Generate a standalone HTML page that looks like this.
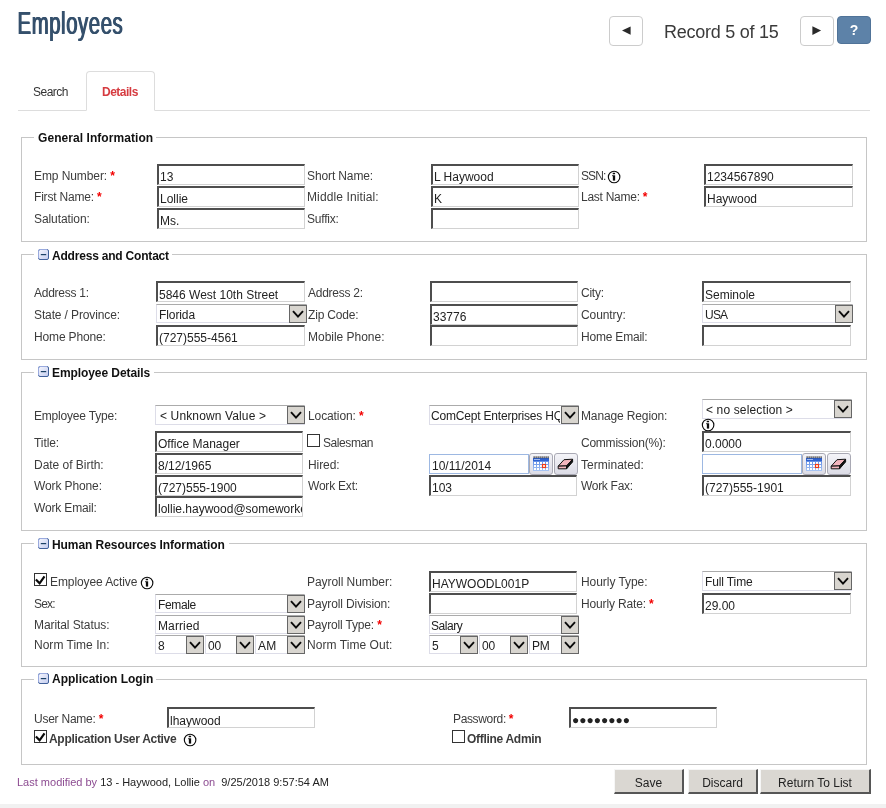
<!DOCTYPE html><html><head><meta charset="utf-8"><title>Employees</title><style>
html,body{margin:0;padding:0;}
body{width:886px;height:808px;position:relative;overflow:hidden;background:#fff;font-family:"Liberation Sans",sans-serif;font-size:12px;color:#333;}
#w{position:absolute;left:0;top:0;width:886px;height:808px;will-change:transform;}
.a{position:absolute;white-space:nowrap;}
.l{position:absolute;white-space:nowrap;font-size:12px;line-height:14px;height:14px;color:#3c3c3c;}
.l b.r{color:#f20000;font-weight:bold;}
.fs{position:absolute;border:1px solid #c6c6c6;box-sizing:border-box;}
.lg{position:absolute;background:#fff;font-weight:bold;font-size:12px;line-height:14px;height:14px;color:#111;white-space:nowrap;}
.in{position:absolute;box-sizing:border-box;height:21px;border-style:solid;border-width:2px 1px 1px 2px;border-color:#4e4e4e #d2d2d2 #d2d2d2 #4e4e4e;background:#fff;font-size:12px;line-height:14px;padding:4px 0 0 1px;color:#222;white-space:nowrap;overflow:hidden;}
.dt{position:absolute;box-sizing:border-box;height:20px;border:1px solid #9db8e2;background:#fff;font-size:12px;line-height:14px;padding:4px 0 0 2px;color:#222;white-space:nowrap;overflow:hidden;}
.se{position:absolute;box-sizing:border-box;height:20px;border:1px solid #dddde8;border-top-color:#ababab;background:#fff;font-size:12px;line-height:14px;padding:3px 0 0 4px;color:#222;white-space:nowrap;}
.se span{display:block;overflow:hidden;}
.se i{position:absolute;box-sizing:border-box;right:-1px;top:0;width:18px;height:18px;border:1px solid #666;background:#d8d5cf;}
.se i svg{position:absolute;left:2px;top:4px;}
.cb{position:absolute;box-sizing:border-box;width:13px;height:13px;border:1px solid #333;background:#fff;}
.cb svg{position:absolute;left:-1px;top:-1px;}
.ic{position:absolute;width:11px;height:11px;}
.inf{position:absolute;width:14px;height:14px;}
.db{position:absolute;box-sizing:border-box;width:24px;height:22px;border:1px solid #a9a9b4;border-radius:3px;background:linear-gradient(#f4f4f8,#dcdce6);}
.db svg{position:absolute;}
.btn{position:absolute;box-sizing:border-box;height:25px;background:#dad7d2;border-style:solid;border-width:1px 2px 2px 1px;border-color:#f6f6f6 #565656 #565656 #f6f6f6;font-size:12px;line-height:14px;text-align:center;padding-top:6px;color:#222;}
</style></head><body><div id="w">
<div class="a" id="h1" style="left:17px;top:3px;font-size:32px;line-height:40px;color:#35506c;letter-spacing:0.9px;text-shadow:0.8px 0 0 #35506c,1.6px 0 0 #35506c;transform-origin:0 0;transform:scaleX(0.636);">Employees</div>
<div class="a" style="left:609px;top:16px;width:34px;height:30px;box-sizing:border-box;border:1px solid #ccc;border-radius:4px;background:#fff;"></div>
<svg class="a" style="left:620px;top:25px" width="12" height="12" viewBox="0 0 12 12"><path d="M10.6 1.4 L2 5.6 L10.6 9.8 Z" fill="#2a2a2a"/></svg>
<div class="a" id="rec" style="left:664px;top:20px;font-size:18px;line-height:24px;color:#3a3a3a;letter-spacing:-0.25px;">Record 5 of 15</div>
<div class="a" style="left:800px;top:16px;width:34px;height:30px;box-sizing:border-box;border:1px solid #ccc;border-radius:4px;background:#fff;"></div>
<svg class="a" style="left:811px;top:25px" width="12" height="12" viewBox="0 0 12 12"><path d="M1.4 1.2 L10.1 5.5 L1.4 9.9 Z" fill="#2a2a2a"/></svg>
<div class="a" style="left:837px;top:16px;width:34px;height:28px;box-sizing:border-box;border:1px solid #507398;border-radius:4px;background:#5d82a8;color:#fff;font-weight:bold;font-size:14px;line-height:27px;text-align:center;">?</div>
<div class="a" style="left:18px;top:110px;width:852px;height:1px;background:#ddd;"></div>
<div class="a" style="left:86px;top:71px;width:69px;height:40px;box-sizing:border-box;border:1px solid #ddd;border-bottom:1px solid #fff;border-radius:4px 4px 0 0;background:#fff;"></div>
<div class="a" id="tab1" style="left:33px;top:85px;font-size:12px;line-height:14px;color:#333;letter-spacing:-0.5px;">Search</div>
<div class="a" id="tab2" style="left:102px;top:85px;font-size:12px;line-height:14px;color:#d63b40;font-weight:bold;letter-spacing:-0.5px;">Details</div>
<div class="fs" style="left:21px;top:137px;width:846px;height:105px;"></div>
<div class="lg" style="left:34px;top:131px;width:118px;padding-left:4px;letter-spacing:0.06px;">General Information</div>
<div class="l" style="left:34px;top:169px;letter-spacing:-0.086px;">Emp Number: <b class="r">*</b></div>
<div class="in" style="left:157px;top:164px;width:148px;">13</div>
<div class="l" style="left:307px;top:169px;letter-spacing:-0.118px;">Short Name:</div>
<div class="in" style="left:431px;top:164px;width:148px;">L Haywood</div>
<div class="l" style="left:581px;top:169px;letter-spacing:-0.923px;">SSN:</div>
<svg class="inf" style="left:607px;top:170px" viewBox="0 0 14 14"><circle cx="7.1" cy="7" r="5.75" fill="#fff" stroke="#0c0c0c" stroke-width="1.15"/><rect x="5.85" y="5.3" width="2.3" height="5.3" fill="#0c0c0c"/><rect x="5.1" y="5.3" width="1" height="0.85" fill="#0c0c0c"/><rect x="5.7" y="2.65" width="2.4" height="1.6" rx="0.5" fill="#0c0c0c"/></svg>
<div class="in" style="left:704px;top:164px;width:149px;">1234567890</div>
<div class="l" style="left:34px;top:190px;letter-spacing:-0.195px;">First Name: <b class="r">*</b></div>
<div class="in" style="left:157px;top:186px;width:148px;">Lollie</div>
<div class="l" style="left:307px;top:190px;letter-spacing:0.114px;">Middle Initial:</div>
<div class="in" style="left:431px;top:186px;width:148px;">K</div>
<div class="l" style="left:581px;top:190px;letter-spacing:-0.262px;">Last Name: <b class="r">*</b></div>
<div class="in" style="left:704px;top:186px;width:149px;">Haywood</div>
<div class="l" style="left:34px;top:212px;letter-spacing:-0.088px;">Salutation:</div>
<div class="in" style="left:157px;top:208px;width:148px;">Ms.</div>
<div class="l" style="left:307px;top:212px;letter-spacing:-0.207px;">Suffix:</div>
<div class="in" style="left:431px;top:208px;width:148px;"></div>
<div class="fs" style="left:21px;top:254px;width:846px;height:106px;"></div>
<div class="lg" style="left:34px;top:249px;width:120px;padding-left:18px;letter-spacing:-0.2px;">Address and Contact</div>
<svg class="ic" style="left:38px;top:249px" viewBox="0 0 11 11"><defs><linearGradient id="g1" x1="0" y1="0" x2="1" y2="1"><stop offset="0" stop-color="#f6f7fe"/><stop offset="1" stop-color="#c3ccef"/></linearGradient></defs><rect x="0.5" y="0.5" width="10" height="10" rx="1.5" fill="url(#g1)" stroke="#40609a"/><path d="M0.5 9.3 V2 Q0.5 0.5 2 0.5 H9.3" fill="none" stroke="#9aaade"/><rect x="2.8" y="5" width="5.4" height="1.2" fill="#1b4166"/></svg>
<div class="l" style="left:34px;top:286px;letter-spacing:-0.253px;">Address 1:</div>
<div class="in" style="left:156px;top:281px;width:149px;padding-top:5px;">5846 West 10th Street</div>
<div class="l" style="left:308px;top:286px;letter-spacing:-0.253px;">Address 2:</div>
<div class="in" style="left:430px;top:281px;width:148px;"></div>
<div class="l" style="left:581px;top:286px;letter-spacing:-0.24px;">City:</div>
<div class="in" style="left:702px;top:281px;width:149px;padding-top:5px;">Seminole</div>
<div class="l" style="left:34px;top:308px;letter-spacing:-0.125px;">State / Province:</div>
<div class="se" style="left:156px;top:304px;width:151px;height:19px;padding-top:3px;padding-left:2px;letter-spacing:-0.094px;"><span style="width:129px">Florida</span><i><svg width="12" height="9" viewBox="0 0 12 9"><path d="M1 1.2 L6 6.6 L11 1.2" fill="none" stroke="#0a0a0a" stroke-width="1.9"/></svg></i></div>
<div class="l" style="left:308px;top:308px;letter-spacing:-0.171px;">Zip Code:</div>
<div class="in" style="left:430px;top:304px;width:148px;">33776</div>
<div class="l" style="left:581px;top:308px;letter-spacing:-0.085px;">Country:</div>
<div class="se" style="left:702px;top:304px;width:151px;height:19px;padding-top:3px;padding-left:2px;letter-spacing:-0.778px;"><span style="width:129px">USA</span><i><svg width="12" height="9" viewBox="0 0 12 9"><path d="M1 1.2 L6 6.6 L11 1.2" fill="none" stroke="#0a0a0a" stroke-width="1.9"/></svg></i></div>
<div class="l" style="left:34px;top:330px;letter-spacing:-0.153px;">Home Phone:</div>
<div class="in" style="left:156px;top:325px;width:149px;">(727)555-4561</div>
<div class="l" style="left:308px;top:330px;letter-spacing:-0.02px;">Mobile Phone:</div>
<div class="in" style="left:430px;top:325px;width:148px;"></div>
<div class="l" style="left:581px;top:330px;letter-spacing:-0.202px;">Home Email:</div>
<div class="in" style="left:702px;top:325px;width:149px;"></div>
<div class="fs" style="left:21px;top:372px;width:846px;height:159px;"></div>
<div class="lg" style="left:34px;top:366px;width:102px;padding-left:18px;letter-spacing:-0.08px;">Employee Details</div>
<svg class="ic" style="left:38px;top:366px" viewBox="0 0 11 11"><defs><linearGradient id="g2" x1="0" y1="0" x2="1" y2="1"><stop offset="0" stop-color="#f6f7fe"/><stop offset="1" stop-color="#c3ccef"/></linearGradient></defs><rect x="0.5" y="0.5" width="10" height="10" rx="1.5" fill="url(#g2)" stroke="#40609a"/><path d="M0.5 9.3 V2 Q0.5 0.5 2 0.5 H9.3" fill="none" stroke="#9aaade"/><rect x="2.8" y="5" width="5.4" height="1.2" fill="#1b4166"/></svg>
<div class="l" style="left:34px;top:409px;letter-spacing:-0.197px;">Employee Type:</div>
<div class="se" style="left:155px;top:405px;width:150px;height:20px;padding-top:3px;padding-left:4px;letter-spacing:0.132px;"><span style="width:126px">&lt; Unknown Value &gt;</span><i><svg width="12" height="9" viewBox="0 0 12 9"><path d="M1 1.2 L6 6.6 L11 1.2" fill="none" stroke="#0a0a0a" stroke-width="1.9"/></svg></i></div>
<div class="l" style="left:308px;top:409px;letter-spacing:-0.104px;">Location: <b class="r">*</b></div>
<div class="se" style="left:429px;top:405px;width:150px;height:20px;padding-top:3px;padding-left:1px;letter-spacing:-0.194px;"><span style="width:129px">ComCept Enterprises HQ</span><i><svg width="12" height="9" viewBox="0 0 12 9"><path d="M1 1.2 L6 6.6 L11 1.2" fill="none" stroke="#0a0a0a" stroke-width="1.9"/></svg></i></div>
<div class="l" style="left:581px;top:409px;letter-spacing:-0.13px;">Manage Region:</div>
<div class="se" style="left:702px;top:399px;width:150px;height:20px;padding-top:3px;padding-left:3px;letter-spacing:0.141px;"><span style="width:127px">&lt; no selection &gt;</span><i><svg width="12" height="9" viewBox="0 0 12 9"><path d="M1 1.2 L6 6.6 L11 1.2" fill="none" stroke="#0a0a0a" stroke-width="1.9"/></svg></i></div>
<svg class="inf" style="left:701px;top:418px" viewBox="0 0 14 14"><circle cx="7.1" cy="7" r="5.75" fill="#fff" stroke="#0c0c0c" stroke-width="1.15"/><rect x="5.85" y="5.3" width="2.3" height="5.3" fill="#0c0c0c"/><rect x="5.1" y="5.3" width="1" height="0.85" fill="#0c0c0c"/><rect x="5.7" y="2.65" width="2.4" height="1.6" rx="0.5" fill="#0c0c0c"/></svg>
<div class="l" style="left:34px;top:436px;letter-spacing:-0.086px;">Title:</div>
<div class="in" style="left:155px;top:431px;width:148px;">Office Manager</div>
<div class="cb" style="left:307px;top:434px;"></div>
<div class="l" style="left:323px;top:436px;letter-spacing:-0.419px;">Salesman</div>
<div class="l" style="left:581px;top:436px;letter-spacing:-0.237px;">Commission(%):</div>
<div class="in" style="left:702px;top:431px;width:149px;">0.0000</div>
<div class="l" style="left:34px;top:458px;letter-spacing:-0.028px;">Date of Birth:</div>
<div class="in" style="left:155px;top:453px;width:148px;">8/12/1965</div>
<div class="l" style="left:308px;top:458px;letter-spacing:-0.08px;">Hired:</div>
<div class="dt" style="left:429px;top:454px;width:100px;">10/11/2014</div>
<div class="db" style="left:529px;top:453px;"><svg style="left:3px;top:2px" width="16" height="16" viewBox="0 0 16 16"><defs><linearGradient id="cg429" x1="0" y1="0" x2="0" y2="1"><stop offset="0" stop-color="#4a7be0"/><stop offset="1" stop-color="#a9c6f4"/></linearGradient></defs><rect x="0" y="2" width="16" height="13" fill="url(#cg429)"/><rect x="0" y="2" width="16" height="3" fill="#2f62d0"/><rect x="1" y="3" width="6" height="1" fill="#9db9f0"/><rect x="0.6" y="0.3" width="1" height="2" fill="#222"/><rect x="2.6" y="0.3" width="1" height="2" fill="#222"/><rect x="4.6" y="0.3" width="1" height="2" fill="#222"/><rect x="6.6" y="0.3" width="1" height="2" fill="#222"/><rect x="8.6" y="0.3" width="1" height="2" fill="#222"/><rect x="10.6" y="0.3" width="1" height="2" fill="#222"/><rect x="12.6" y="0.3" width="1" height="2" fill="#222"/><rect x="14.6" y="0.3" width="1" height="2" fill="#222"/><rect x="1" y="6" width="2" height="2" fill="#fff"/><rect x="4" y="6" width="2" height="2" fill="#fff"/><rect x="7" y="6" width="2" height="2" fill="#fff"/><rect x="10" y="6" width="2" height="2" fill="#fff"/><rect x="13" y="6" width="2" height="2" fill="#fff"/><rect x="1" y="9" width="2" height="2" fill="#fff"/><rect x="4" y="9" width="2" height="2" fill="#fff"/><rect x="7" y="9" width="2" height="2" fill="#fff"/><rect x="10" y="9" width="2" height="2" fill="#fff"/><rect x="13" y="9" width="2" height="2" fill="#fff"/><rect x="1" y="12" width="2" height="2" fill="#fff"/><rect x="4" y="12" width="2" height="2" fill="#fff"/><rect x="7" y="12" width="2" height="2" fill="#fff"/><rect x="10" y="12" width="2" height="2" fill="#fff"/><rect x="13" y="12" width="2" height="2" fill="#fff"/><rect x="9.5" y="8.5" width="3" height="3" fill="#fff" stroke="#f03a14" stroke-width="1.2"/></svg></div>
<div class="db" style="left:554px;top:453px;"><svg style="left:2px;top:3px" width="18" height="14" viewBox="0 0 18 14"><path d="M1.2 9.2 L7 2.7 L15.6 2.2 L9.6 8.9 Z" fill="#f3b6be" stroke="#111" stroke-width="1" stroke-linejoin="round"/><path d="M1.2 9.2 L9.6 8.9 L9.6 11.8 L1.2 11.8 Z" fill="#f3b6be" stroke="#111" stroke-width="1" stroke-linejoin="round"/><path d="M9.6 8.9 L15.6 2.2 L15.6 4.9 L9.6 11.8 Z" fill="#111" stroke="#111" stroke-width="1" stroke-linejoin="round"/></svg></div>
<div class="l" style="left:581px;top:458px;letter-spacing:0.02px;">Terminated:</div>
<div class="dt" style="left:702px;top:454px;width:100px;"></div>
<div class="db" style="left:802px;top:453px;"><svg style="left:3px;top:2px" width="16" height="16" viewBox="0 0 16 16"><defs><linearGradient id="cg702" x1="0" y1="0" x2="0" y2="1"><stop offset="0" stop-color="#4a7be0"/><stop offset="1" stop-color="#a9c6f4"/></linearGradient></defs><rect x="0" y="2" width="16" height="13" fill="url(#cg702)"/><rect x="0" y="2" width="16" height="3" fill="#2f62d0"/><rect x="1" y="3" width="6" height="1" fill="#9db9f0"/><rect x="0.6" y="0.3" width="1" height="2" fill="#222"/><rect x="2.6" y="0.3" width="1" height="2" fill="#222"/><rect x="4.6" y="0.3" width="1" height="2" fill="#222"/><rect x="6.6" y="0.3" width="1" height="2" fill="#222"/><rect x="8.6" y="0.3" width="1" height="2" fill="#222"/><rect x="10.6" y="0.3" width="1" height="2" fill="#222"/><rect x="12.6" y="0.3" width="1" height="2" fill="#222"/><rect x="14.6" y="0.3" width="1" height="2" fill="#222"/><rect x="1" y="6" width="2" height="2" fill="#fff"/><rect x="4" y="6" width="2" height="2" fill="#fff"/><rect x="7" y="6" width="2" height="2" fill="#fff"/><rect x="10" y="6" width="2" height="2" fill="#fff"/><rect x="13" y="6" width="2" height="2" fill="#fff"/><rect x="1" y="9" width="2" height="2" fill="#fff"/><rect x="4" y="9" width="2" height="2" fill="#fff"/><rect x="7" y="9" width="2" height="2" fill="#fff"/><rect x="10" y="9" width="2" height="2" fill="#fff"/><rect x="13" y="9" width="2" height="2" fill="#fff"/><rect x="1" y="12" width="2" height="2" fill="#fff"/><rect x="4" y="12" width="2" height="2" fill="#fff"/><rect x="7" y="12" width="2" height="2" fill="#fff"/><rect x="10" y="12" width="2" height="2" fill="#fff"/><rect x="13" y="12" width="2" height="2" fill="#fff"/><rect x="9.5" y="8.5" width="3" height="3" fill="#fff" stroke="#f03a14" stroke-width="1.2"/></svg></div>
<div class="db" style="left:827px;top:453px;"><svg style="left:2px;top:3px" width="18" height="14" viewBox="0 0 18 14"><path d="M1.2 9.2 L7 2.7 L15.6 2.2 L9.6 8.9 Z" fill="#f3b6be" stroke="#111" stroke-width="1" stroke-linejoin="round"/><path d="M1.2 9.2 L9.6 8.9 L9.6 11.8 L1.2 11.8 Z" fill="#f3b6be" stroke="#111" stroke-width="1" stroke-linejoin="round"/><path d="M9.6 8.9 L15.6 2.2 L15.6 4.9 L9.6 11.8 Z" fill="#111" stroke="#111" stroke-width="1" stroke-linejoin="round"/></svg></div>
<div class="l" style="left:34px;top:479px;letter-spacing:-0.116px;">Work Phone:</div>
<div class="in" style="left:155px;top:475px;width:148px;">(727)555-1900</div>
<div class="l" style="left:308px;top:479px;letter-spacing:-0.209px;">Work Ext:</div>
<div class="in" style="left:429px;top:475px;width:148px;">103</div>
<div class="l" style="left:581px;top:479px;letter-spacing:-0.302px;">Work Fax:</div>
<div class="in" style="left:702px;top:475px;width:149px;">(727)555-1901</div>
<div class="l" style="left:34px;top:501px;letter-spacing:-0.165px;">Work Email:</div>
<div class="in" style="left:155px;top:496px;width:148px;">lollie.haywood@someworkemail.com</div>
<div class="fs" style="left:21px;top:543px;width:846px;height:124px;"></div>
<div class="lg" style="left:34px;top:538px;width:177px;padding-left:18px;letter-spacing:-0.07px;">Human Resources Information</div>
<svg class="ic" style="left:38px;top:538px" viewBox="0 0 11 11"><defs><linearGradient id="g3" x1="0" y1="0" x2="1" y2="1"><stop offset="0" stop-color="#f6f7fe"/><stop offset="1" stop-color="#c3ccef"/></linearGradient></defs><rect x="0.5" y="0.5" width="10" height="10" rx="1.5" fill="url(#g3)" stroke="#40609a"/><path d="M0.5 9.3 V2 Q0.5 0.5 2 0.5 H9.3" fill="none" stroke="#9aaade"/><rect x="2.8" y="5" width="5.4" height="1.2" fill="#1b4166"/></svg>
<div class="cb" style="left:34px;top:573px;"><svg width="13" height="13" viewBox="0 0 13 13"><path d="M1.9 6.5 L5.6 10.3 L10.5 3.3" fill="none" stroke="#0a0a0a" stroke-width="2.2"/></svg></div>
<div class="l" style="left:50px;top:575px;letter-spacing:-0.092px;">Employee Active</div>
<svg class="inf" style="left:140px;top:576px" viewBox="0 0 14 14"><circle cx="7.1" cy="7" r="5.75" fill="#fff" stroke="#0c0c0c" stroke-width="1.15"/><rect x="5.85" y="5.3" width="2.3" height="5.3" fill="#0c0c0c"/><rect x="5.1" y="5.3" width="1" height="0.85" fill="#0c0c0c"/><rect x="5.7" y="2.65" width="2.4" height="1.6" rx="0.5" fill="#0c0c0c"/></svg>
<div class="l" style="left:307px;top:575px;letter-spacing:-0.058px;">Payroll Number:</div>
<div class="in" style="left:429px;top:571px;width:148px;">HAYWOODL001P</div>
<div class="l" style="left:581px;top:575px;letter-spacing:-0.055px;">Hourly Type:</div>
<div class="se" style="left:702px;top:571px;width:150px;height:20px;padding-top:3px;padding-left:2px;letter-spacing:-0.122px;"><span style="width:128px">Full Time</span><i><svg width="12" height="9" viewBox="0 0 12 9"><path d="M1 1.2 L6 6.6 L11 1.2" fill="none" stroke="#0a0a0a" stroke-width="1.9"/></svg></i></div>
<div class="l" style="left:34px;top:597px;letter-spacing:-0.814px;">Sex:</div>
<div class="se" style="left:155px;top:594px;width:150px;height:19px;padding-top:3px;padding-left:2px;letter-spacing:-0.37px;"><span style="width:128px">Female</span><i><svg width="12" height="9" viewBox="0 0 12 9"><path d="M1 1.2 L6 6.6 L11 1.2" fill="none" stroke="#0a0a0a" stroke-width="1.9"/></svg></i></div>
<div class="l" style="left:307px;top:597px;letter-spacing:-0.12px;">Payroll Division:</div>
<div class="in" style="left:429px;top:593px;width:148px;"></div>
<div class="l" style="left:581px;top:597px;letter-spacing:-0.155px;">Hourly Rate: <b class="r">*</b></div>
<div class="in" style="left:702px;top:593px;width:149px;">29.00</div>
<div class="l" style="left:34px;top:618px;letter-spacing:-0.085px;">Marital Status:</div>
<div class="se" style="left:155px;top:615px;width:150px;height:19px;padding-top:3px;padding-left:2px;letter-spacing:0.11px;"><span style="width:128px">Married</span><i><svg width="12" height="9" viewBox="0 0 12 9"><path d="M1 1.2 L6 6.6 L11 1.2" fill="none" stroke="#0a0a0a" stroke-width="1.9"/></svg></i></div>
<div class="l" style="left:307px;top:618px;letter-spacing:-0.163px;">Payroll Type: <b class="r">*</b></div>
<div class="se" style="left:429px;top:615px;width:150px;height:19px;padding-top:3px;padding-left:1px;letter-spacing:-0.429px;"><span style="width:129px">Salary</span><i><svg width="12" height="9" viewBox="0 0 12 9"><path d="M1 1.2 L6 6.6 L11 1.2" fill="none" stroke="#0a0a0a" stroke-width="1.9"/></svg></i></div>
<div class="l" style="left:34px;top:638px;letter-spacing:0.016px;">Norm Time In:</div>
<div class="se" style="left:155px;top:635px;width:49px;height:19px;padding-top:3px;padding-left:2px;letter-spacing:-0.219px;"><span style="width:27px">8</span><i><svg width="12" height="9" viewBox="0 0 12 9"><path d="M1 1.2 L6 6.6 L11 1.2" fill="none" stroke="#0a0a0a" stroke-width="1.9"/></svg></i></div>
<div class="se" style="left:205px;top:635px;width:49px;height:19px;padding-top:3px;padding-left:2px;letter-spacing:-0.211px;"><span style="width:27px">00</span><i><svg width="12" height="9" viewBox="0 0 12 9"><path d="M1 1.2 L6 6.6 L11 1.2" fill="none" stroke="#0a0a0a" stroke-width="1.9"/></svg></i></div>
<div class="se" style="left:255px;top:635px;width:50px;height:19px;padding-top:3px;padding-left:2px;letter-spacing:0.258px;"><span style="width:28px">AM</span><i><svg width="12" height="9" viewBox="0 0 12 9"><path d="M1 1.2 L6 6.6 L11 1.2" fill="none" stroke="#0a0a0a" stroke-width="1.9"/></svg></i></div>
<div class="l" style="left:307px;top:638px;letter-spacing:0.057px;">Norm Time Out:</div>
<div class="se" style="left:429px;top:635px;width:49px;height:19px;padding-top:3px;padding-left:2px;letter-spacing:-0.219px;"><span style="width:27px">5</span><i><svg width="12" height="9" viewBox="0 0 12 9"><path d="M1 1.2 L6 6.6 L11 1.2" fill="none" stroke="#0a0a0a" stroke-width="1.9"/></svg></i></div>
<div class="se" style="left:479px;top:635px;width:49px;height:19px;padding-top:3px;padding-left:2px;letter-spacing:-0.211px;"><span style="width:27px">00</span><i><svg width="12" height="9" viewBox="0 0 12 9"><path d="M1 1.2 L6 6.6 L11 1.2" fill="none" stroke="#0a0a0a" stroke-width="1.9"/></svg></i></div>
<div class="se" style="left:529px;top:635px;width:50px;height:19px;padding-top:3px;padding-left:2px;letter-spacing:-0.252px;"><span style="width:28px">PM</span><i><svg width="12" height="9" viewBox="0 0 12 9"><path d="M1 1.2 L6 6.6 L11 1.2" fill="none" stroke="#0a0a0a" stroke-width="1.9"/></svg></i></div>
<div class="fs" style="left:21px;top:679px;width:846px;height:86px;"></div>
<div class="lg" style="left:34px;top:672px;width:104px;padding-left:18px;letter-spacing:0px;">Application Login</div>
<svg class="ic" style="left:38px;top:673px" viewBox="0 0 11 11"><defs><linearGradient id="g4" x1="0" y1="0" x2="1" y2="1"><stop offset="0" stop-color="#f6f7fe"/><stop offset="1" stop-color="#c3ccef"/></linearGradient></defs><rect x="0.5" y="0.5" width="10" height="10" rx="1.5" fill="url(#g4)" stroke="#40609a"/><path d="M0.5 9.3 V2 Q0.5 0.5 2 0.5 H9.3" fill="none" stroke="#9aaade"/><rect x="2.8" y="5" width="5.4" height="1.2" fill="#1b4166"/></svg>
<div class="l" style="left:34px;top:712px;letter-spacing:-0.242px;">User Name: <b class="r">*</b></div>
<div class="in" style="left:167px;top:707px;width:148px;padding-top:5px;">lhaywood</div>
<div class="l" style="left:453px;top:712px;letter-spacing:-0.351px;">Password: <b class="r">*</b></div>
<div class="in" style="left:569px;top:707px;width:148px;">●●●●●●●●</div>
<div class="cb" style="left:34px;top:730px;"><svg width="13" height="13" viewBox="0 0 13 13"><path d="M1.9 6.5 L5.6 10.3 L10.5 3.3" fill="none" stroke="#0a0a0a" stroke-width="2.2"/></svg></div>
<div class="l" style="left:49px;top:732px;font-weight:bold;letter-spacing:-0.3px;">Application User Active</div>
<svg class="inf" style="left:183px;top:733px" viewBox="0 0 14 14"><circle cx="7.1" cy="7" r="5.75" fill="#fff" stroke="#0c0c0c" stroke-width="1.15"/><rect x="5.85" y="5.3" width="2.3" height="5.3" fill="#0c0c0c"/><rect x="5.1" y="5.3" width="1" height="0.85" fill="#0c0c0c"/><rect x="5.7" y="2.65" width="2.4" height="1.6" rx="0.5" fill="#0c0c0c"/></svg>
<div class="cb" style="left:452px;top:730px;"></div>
<div class="l" style="left:467px;top:732px;font-weight:bold;letter-spacing:-0.3px;">Offline Admin</div>
<div class="a" style="left:17px;top:775px;font-size:11px;line-height:14px;color:#222;"><span style="color:#8c4b91">Last modified by</span> 13 - Haywood, Lollie <span style="color:#8c4b91">on</span>&nbsp; 9/25/2018 9:57:54 AM</div>
<div class="btn" style="left:614px;top:769px;width:70px;">Save</div>
<div class="btn" style="left:688px;top:769px;width:70px;">Discard</div>
<div class="btn" style="left:760px;top:769px;width:111px;">Return To List</div>
<div class="a" style="left:0;top:804px;width:886px;height:4px;background:#f1f1f1;"></div>
</div></body></html>
